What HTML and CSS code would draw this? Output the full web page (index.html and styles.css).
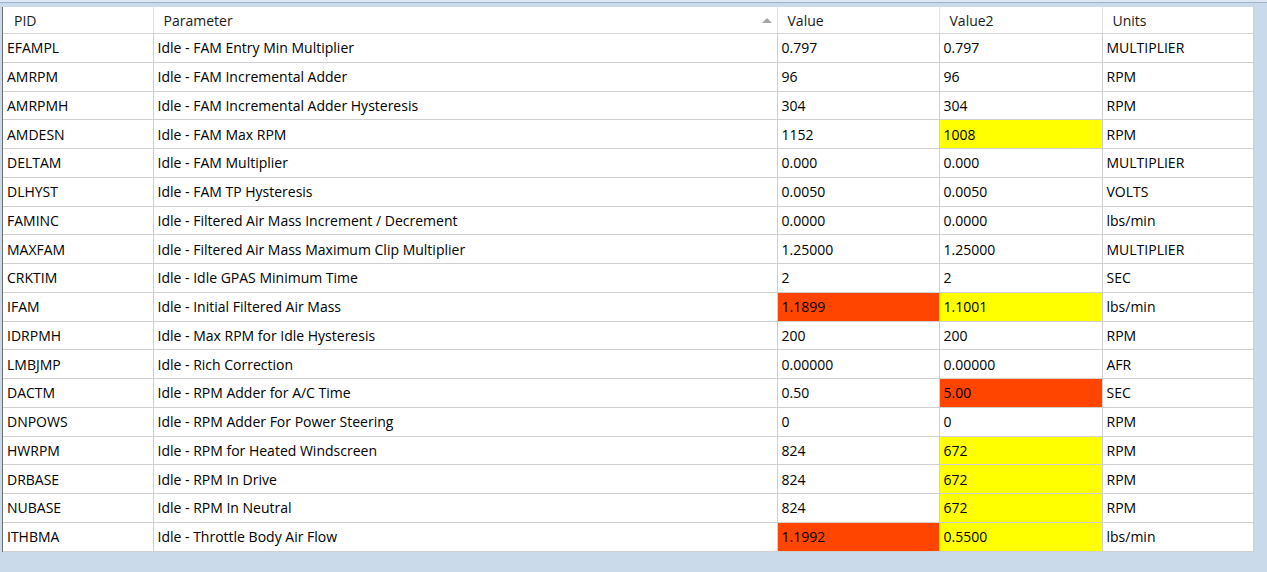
FILE: index.html
```html
<!DOCTYPE html>
<html>
<head>
<meta charset="utf-8">
<link rel="stylesheet" href="styles.css">
</head>
<body>
<div class="frame">
  <div class="grid-wrap">
    <table class="grid">
      <colgroup>
        <col class="c-pid"><col class="c-param"><col class="c-val"><col class="c-val2"><col class="c-units">
      </colgroup>
      <thead>
        <tr>
          <th>PID</th>
          <th class="sorted">Parameter<span class="sort-arrow"></span></th>
          <th>Value</th>
          <th>Value2</th>
          <th>Units</th>
        </tr>
      </thead>
      <tbody>
        <tr><td>EFAMPL</td><td>Idle - FAM Entry Min Multiplier</td><td>0.797</td><td>0.797</td><td>MULTIPLIER</td></tr>
        <tr><td>AMRPM</td><td>Idle - FAM Incremental Adder</td><td>96</td><td>96</td><td>RPM</td></tr>
        <tr><td>AMRPMH</td><td>Idle - FAM Incremental Adder Hysteresis</td><td>304</td><td>304</td><td>RPM</td></tr>
        <tr><td>AMDESN</td><td>Idle - FAM Max RPM</td><td>1152</td><td class="yel">1008</td><td>RPM</td></tr>
        <tr><td>DELTAM</td><td>Idle - FAM Multiplier</td><td>0.000</td><td>0.000</td><td>MULTIPLIER</td></tr>
        <tr><td>DLHYST</td><td>Idle - FAM TP Hysteresis</td><td>0.0050</td><td>0.0050</td><td>VOLTS</td></tr>
        <tr><td>FAMINC</td><td>Idle - Filtered Air Mass Increment / Decrement</td><td>0.0000</td><td>0.0000</td><td>lbs/min</td></tr>
        <tr><td>MAXFAM</td><td>Idle - Filtered Air Mass Maximum Clip Multiplier</td><td>1.25000</td><td>1.25000</td><td>MULTIPLIER</td></tr>
        <tr><td>CRKTIM</td><td>Idle - Idle GPAS Minimum Time</td><td>2</td><td>2</td><td>SEC</td></tr>
        <tr><td>IFAM</td><td>Idle - Initial Filtered Air Mass</td><td class="red">1.1899</td><td class="yel">1.1001</td><td>lbs/min</td></tr>
        <tr><td>IDRPMH</td><td>Idle - Max RPM for Idle Hysteresis</td><td>200</td><td>200</td><td>RPM</td></tr>
        <tr><td>LMBJMP</td><td>Idle - Rich Correction</td><td>0.00000</td><td>0.00000</td><td>AFR</td></tr>
        <tr><td>DACTM</td><td>Idle - RPM Adder for A/C Time</td><td>0.50</td><td class="red">5.00</td><td>SEC</td></tr>
        <tr><td>DNPOWS</td><td>Idle - RPM Adder For Power Steering</td><td>0</td><td>0</td><td>RPM</td></tr>
        <tr><td>HWRPM</td><td>Idle - RPM for Heated Windscreen</td><td>824</td><td class="yel">672</td><td>RPM</td></tr>
        <tr><td>DRBASE</td><td>Idle - RPM In Drive</td><td>824</td><td class="yel">672</td><td>RPM</td></tr>
        <tr><td>NUBASE</td><td>Idle - RPM In Neutral</td><td>824</td><td class="yel">672</td><td>RPM</td></tr>
        <tr><td>ITHBMA</td><td>Idle - Throttle Body Air Flow</td><td class="red">1.1992</td><td class="yel">0.5500</td><td>lbs/min</td></tr>
      </tbody>
    </table>
  </div>
</div>
</body>
</html>
```

FILE: styles.css
```css
html, body {
  margin: 0;
  padding: 0;
  background: #cbdaeb;
  height: 100%;
}
body {
  font-family: "Open Sans", "Noto Sans", "Liberation Sans", sans-serif;
  font-size: 14px;
  color: #000;
}
.frame {
  padding-top: 2px;
  background: linear-gradient(#dde7f3, #dde7f3) top / 100% 2px no-repeat;
}
.frame::before {
  content: "";
  display: block;
  height: 1px;
  background: #9fb3cb;
}
.grid-wrap {
  margin-top: 4px;
  margin-left: 2px;
  width: 1251px;
  border-left: 1px solid #6e6e6e;
  background: #fff;
}
.grid {
  border-collapse: collapse;
  table-layout: fixed;
  width: 1250px;
}
.c-pid { width: 150px; }
.c-param { width: 624px; }
.c-val { width: 162px; }
.c-val2 { width: 163px; }
.c-units { width: 151px; }

th {
  height: 26px;
  font-weight: normal;
  text-align: left;
  padding: 0 0 0 10px;
  color: #1a1a1a;
  border-right: 1px solid #e3e3e3;
  border-bottom: 1px solid #d4d4d4;
  background: #fff;
  position: relative;
}
th:first-child { padding-left: 11px; }
.sort-arrow {
  position: absolute;
  right: 5px;
  top: 11px;
  width: 0;
  height: 0;
  border-left: 5px solid transparent;
  border-right: 5px solid transparent;
  border-bottom: 5px solid #a6a6a6;
}
td {
  height: 27.76px;
  padding: 0 0 0 4px;
  border-right: 1px solid #d0d0d0;
  border-bottom: 1px solid #d0d0d0;
  white-space: nowrap;
  overflow: hidden;
}
td:last-child, th:last-child { border-right: 1px solid #d0d0d0; }
.yel { background: #ffff00; }
.red { background: #ff4500; }
```
